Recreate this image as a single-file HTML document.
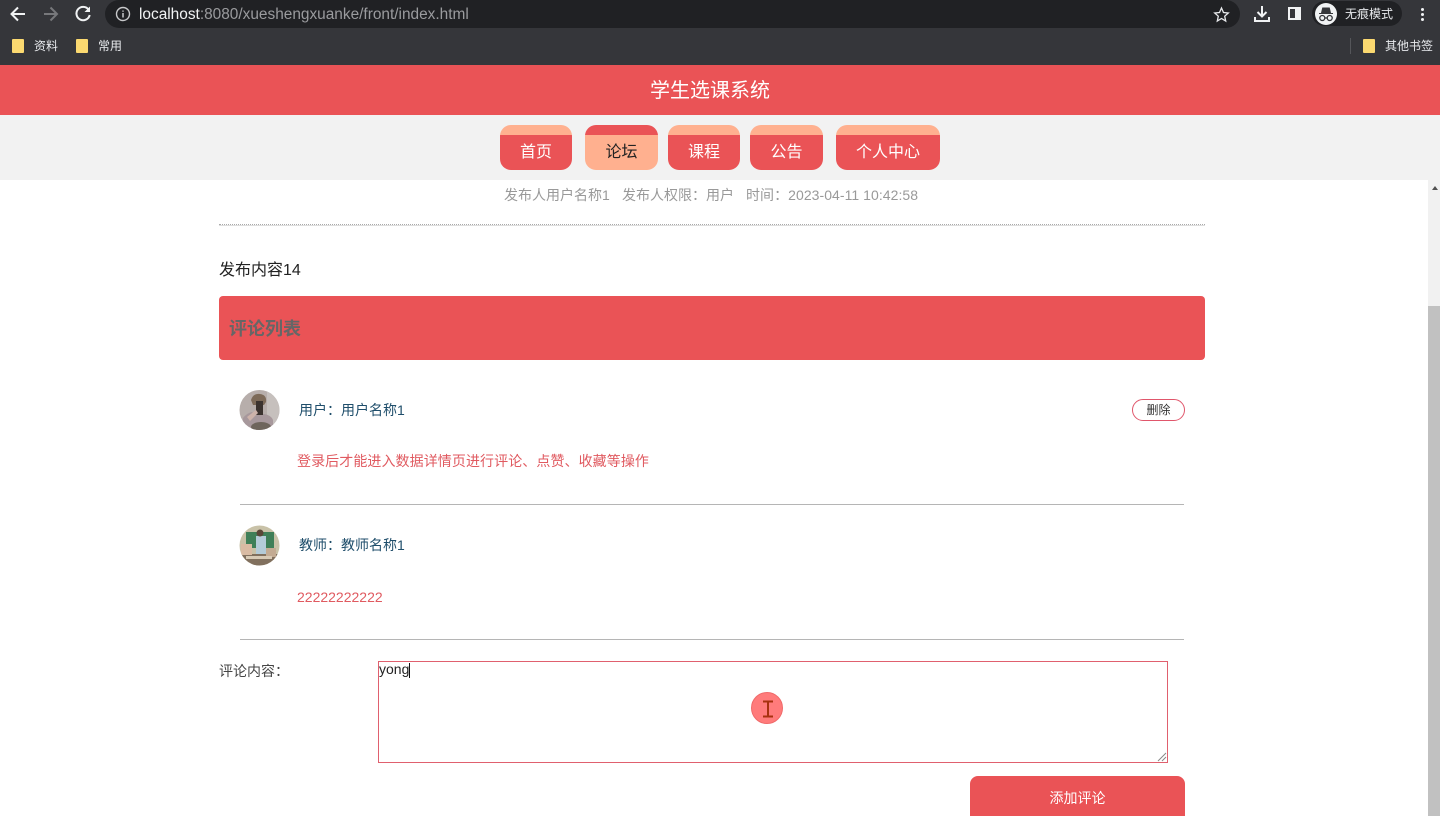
<!DOCTYPE html>
<html lang="zh-CN">
<head>
<meta charset="utf-8">
<title>学生选课系统</title>
<style>
*{box-sizing:border-box;margin:0;padding:0}
html,body{width:1440px;height:816px;overflow:hidden;background:#fff;font-family:"Liberation Sans","Noto Sans CJK SC",sans-serif}
.a{position:absolute;white-space:nowrap}
.tab{position:absolute;top:125px;height:45px;border-radius:11px;background:linear-gradient(#ffb08f 0,#ffb08f 10px,#ea5356 10px);color:#fff;font-size:16px;text-align:center;line-height:56px}
.tab.on{background:linear-gradient(#ea5356 0,#ea5356 10px,#ffb08f 10px);color:#222}
.folder{position:absolute;width:12px;height:14px;background:#fbd970;border-radius:1px}
</style>
</head>
<body>
<!-- browser chrome -->
<div class="a" style="left:0;top:0;width:1440px;height:65px;background:#35363a"></div>
<div class="a" style="left:105px;top:0;width:1135px;height:28px;background:#202124;border-radius:14px"></div>
<svg class="a" style="left:0;top:0" width="110" height="28" viewBox="0 0 110 28" fill="none" stroke-width="2">
<path d="M25 14H12M18 7.500L11.500 14l6.500 6.500" stroke="#f1f3f4"/>
<path d="M57 14H44M50.500 7.500L57 14l-6.500 6.500" stroke="#77787b"/>
<path d="M88.500 9.500A6.700 6.700 0 1 0 89.700 15" stroke="#f1f3f4"/>
<path d="M90 6.500v5.500h-5.500z" fill="#f1f3f4"/>
</svg>
<svg class="a" style="left:115px;top:6px" width="16" height="16" viewBox="0 0 16 16" fill="none">
<circle cx="8" cy="8" r="6.500" stroke="#c8c9cb" stroke-width="1.400"/>
<path d="M8 7v4.500M8 4.500v1.300" stroke="#c8c9cb" stroke-width="1.500"/>
</svg>
<div class="a" style="left:139px;top:5px;font-size:15.420px;line-height:19px;color:#9a9b9e"><span style="color:#f1f3f4">localhost</span>:8080/xueshengxuanke/front/index.html</div>
<svg class="a" style="left:1213px;top:6px" width="17" height="17" viewBox="0 0 17 17" fill="none">
<path d="M8.500 2l2 4.500 4.800.5-3.600 3.200 1 4.800-4.200-2.500-4.200 2.500 1-4.800L1.700 7l4.800-.5z" stroke="#e8eaed" stroke-width="1.300"/>
</svg>
<svg class="a" style="left:1253px;top:4px" width="18" height="20" viewBox="0 0 18 20" fill="none" stroke="#f1f3f4" stroke-width="2">
<path d="M9 2v10M4.500 8L9 12.500 13.500 8M2 13v4h14v-4"/>
</svg>
<div class="a" style="left:1288px;top:7px;width:13px;height:13px;border:2px solid #f1f3f4;border-right-width:6px"></div>
<div class="a" style="left:1312px;top:1px;width:90px;height:25px;background:#202124;border-radius:13px"></div>
<div class="a" style="left:1315px;top:3px;width:22px;height:22px;background:#f1f3f4;border-radius:50%"></div>
<svg class="a" style="left:1315px;top:3px" width="22" height="22" viewBox="0 0 22 22" fill="none">
<path d="M4 10.500h14M6.500 10l1.200-5h6.600l1.200 5z" fill="#35363a" stroke="#35363a"/>
<circle cx="7.300" cy="15" r="2.500" stroke="#35363a" stroke-width="1.300"/>
<circle cx="14.700" cy="15" r="2.500" stroke="#35363a" stroke-width="1.300"/>
<path d="M9.800 15h2.400" stroke="#35363a" stroke-width="1.200"/>
</svg>
<div class="a" style="left:1345px;top:7px;font-size:12px;line-height:15px;color:#e8eaed">无痕模式</div>
<div class="a" style="left:1421px;top:8px;width:3px;height:3px;background:#f1f3f4;border-radius:50%;box-shadow:0 5px 0 #f1f3f4,0 10px 0 #f1f3f4"></div>
<div class="folder" style="left:12px;top:39px"></div>
<div class="a" style="left:34px;top:39px;font-size:12px;line-height:15px;color:#e8eaed">资料</div>
<div class="folder" style="left:76px;top:39px"></div>
<div class="a" style="left:98px;top:39px;font-size:12px;line-height:15px;color:#e8eaed">常用</div>
<div class="a" style="left:1350px;top:38px;width:1px;height:16px;background:#55565a"></div>
<div class="folder" style="left:1363px;top:39px"></div>
<div class="a" style="left:1385px;top:39px;font-size:12px;line-height:15px;color:#e8eaed">其他书签</div>

<!-- page header -->
<div class="a" style="left:0;top:65px;width:1440px;height:50px;background:#ea5356"></div>
<div class="a" style="left:0;top:79px;width:1420px;text-align:center;font-size:20px;line-height:24px;color:#fff">学生选课系统</div>
<div class="a" style="left:0;top:115px;width:1440px;height:65px;background:#f2f2f2"></div>
<div class="tab" style="left:500px;width:72px">首页</div>
<div class="tab on" style="left:585px;width:73px">论坛</div>
<div class="tab" style="left:668px;width:72px">课程</div>
<div class="tab" style="left:750px;width:73px">公告</div>
<div class="tab" style="left:836px;width:104px">个人中心</div>

<!-- scrollbar -->
<div class="a" style="left:1428px;top:180px;width:12px;height:636px;background:#f1f1f1"></div>
<div class="a" style="left:1428px;top:306px;width:12px;height:510px;background:#c1c1c1"></div>
<div class="a" style="left:1432px;top:186px;width:0;height:0;border-left:3.500px solid transparent;border-right:3.500px solid transparent;border-bottom:4px solid #505050"></div>

<!-- content -->
<div class="a" style="left:504px;top:186px;font-size:14px;line-height:18px;color:#999">发布人用户名称1</div>
<div class="a" style="left:622px;top:186px;font-size:14px;line-height:18px;color:#999">发布人权限：用户</div>
<div class="a" style="left:746px;top:186px;font-size:14px;line-height:18px;color:#999;letter-spacing:.05px">时间：2023-04-11 10:42:58</div>
<div class="a" style="left:219px;top:224px;width:986px;height:2px;border-top:1px dotted #aaa;border-bottom:1px solid #ddd"></div>
<div class="a" style="left:219px;top:261px;font-size:16px;line-height:20px;color:#222">发布内容14</div>
<div class="a" style="left:219px;top:296px;width:986px;height:64px;background:#ea5356;border-radius:4px"></div>
<div class="a" style="left:229px;top:318px;font-size:18px;line-height:22px;font-weight:bold;color:#666">评论列表</div>

<svg class="a" style="left:239px;top:390px" width="41" height="41" viewBox="0 0 41 41">
<defs><clipPath id="c1"><circle cx="20.500" cy="20" r="20"/></clipPath></defs>
<g clip-path="url(#c1)">
<rect width="41" height="41" fill="#b7aeab"/>
<rect x="28" width="13" height="41" fill="#c6c0bd"/>
<path d="M12 10q2-7 9-6 7 1 6 8l-2 3H14z" fill="#7d6a58"/>
<path d="M4 41V28q4-5 9-6l4 3 8-1q7 1 9 6v11z" fill="#a7989c"/>
<rect x="17" y="11" width="7" height="14" fill="#3b332f"/>
<path d="M8 27l9-7 2 3-8 8z" fill="#cdb3aa"/>
<ellipse cx="22" cy="37" rx="10" ry="5" fill="#6e655c"/>
</g>
</svg>
<div class="a" style="left:299px;top:401px;font-size:14px;line-height:18px;color:#1f4e6b">用户：用户名称1</div>
<div class="a" style="left:1132px;top:399px;width:53px;height:22px;border:1px solid #e0566b;border-radius:11px;font-size:12px;line-height:20px;text-align:center;color:#333">删除</div>
<div class="a" style="left:297px;top:452px;font-size:14px;line-height:18px;letter-spacing:.08px;color:#e05a60">登录后才能进入数据详情页进行评论、点赞、收藏等操作</div>
<div class="a" style="left:240px;top:504px;width:944px;height:1px;background:#b5b5b5"></div>

<svg class="a" style="left:239px;top:525px" width="41" height="41" viewBox="0 0 41 41">
<defs><clipPath id="c2"><circle cx="20.500" cy="20.500" r="20"/></clipPath></defs>
<g clip-path="url(#c2)">
<rect width="41" height="41" fill="#c9c2a8"/>
<rect x="7" y="7" width="28" height="16" fill="#3f7f58"/>
<rect x="17" y="11" width="10" height="23" fill="#b4cbd8"/>
<circle cx="21" cy="8" r="3.500" fill="#5a4638"/>
<rect y="29" width="41" height="12" fill="#81705e"/>
<rect x="2" y="19" width="11" height="11" fill="#d9bba3"/>
<rect x="27" y="23" width="10" height="9" fill="#c3ab93"/>
<rect x="7" y="31" width="26" height="3" fill="#d8cab5"/>
</g>
</svg>
<div class="a" style="left:299px;top:536px;font-size:14px;line-height:18px;color:#1f4e6b">教师：教师名称1</div>
<div class="a" style="left:297px;top:588px;font-size:14px;line-height:18px;color:#e05a60">22222222222</div>
<div class="a" style="left:240px;top:639px;width:944px;height:1px;background:#b5b5b5"></div>

<div class="a" style="left:219px;top:662px;font-size:14px;line-height:18px;color:#444">评论内容：</div>
<div class="a" style="left:378px;top:661px;width:790px;height:102px;border:1px solid #e0606e"></div>
<div class="a" style="left:379px;top:660px;font-size:14px;line-height:18px;color:#222">yong</div>
<div class="a" style="left:409px;top:663px;width:1px;height:15px;background:#111"></div>
<svg class="a" style="left:1157px;top:752px" width="10" height="10" viewBox="0 0 10 10" fill="none" stroke="#888">
<path d="M1 9L9 1M5 9L9 5"/>
</svg>

<div class="a" style="left:751px;top:692px;width:32px;height:32px;border-radius:50%;background:#ff7b7b;border:1px solid #f06a6a"></div>
<svg class="a" style="left:759px;top:699px" width="18" height="20" viewBox="0 0 18 20" fill="none" stroke="#a8310f" stroke-width="2">
<path d="M4 2.500h10M4 17.500h10M9 2.500v15"/>
</svg>

<div class="a" style="left:970px;top:776px;width:215px;height:40px;background:#ea5356;border-radius:8px 8px 0 0;font-size:14px;line-height:44px;text-align:center;color:#fff">添加评论</div>
</body>
</html>
